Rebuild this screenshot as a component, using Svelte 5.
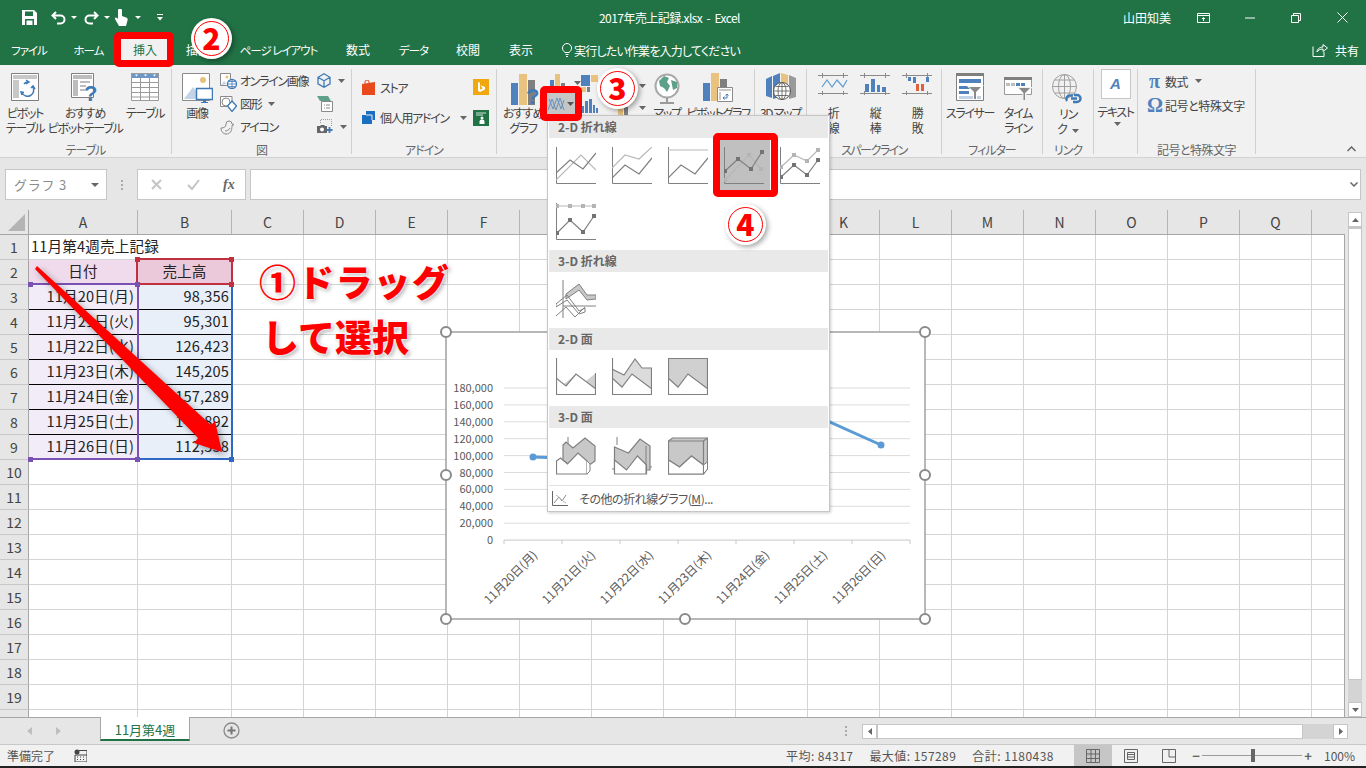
<script>
    const tabs = [
        {label: 'ファイル', w: 58, kana: true},
        {label: 'ホーム', w: 61, kana: true},
        {label: '挿入', w: 52, active: true},
        {label: '描画', w: 54},
        {label: 'ページ レイアウト', w: 107, kana: true},
        {label: '数式', w: 52},
        {label: 'データ', w: 59, kana: true},
        {label: '校閲', w: 50},
        {label: '表示', w: 56}
    ]

    const colWidths = [109, 94, ...Array(16).fill(72)]
    const colNames = 'ABCDEFGHIJKLMNOPQR'.split('')
    const colCount = colWidths.length
    const rowCount = 20

    const sales = [
        ['11月20日(月)', '98,356'],
        ['11月21日(火)', '95,301'],
        ['11月22日(水)', '126,423'],
        ['11月23日(木)', '145,205'],
        ['11月24日(金)', '157,289'],
        ['11月25日(土)', '143,892'],
        ['11月26日(日)', '112,538']
    ]

    function cellText(row, col){
        if(row === 1 && col === 0) return '11月第4週売上記録'
        if(row === 2 && col === 0) return '日付'
        if(row === 2 && col === 1) return '売上高'
        if(row >= 3 && row <= 9 && col < 2) return sales[row - 3][col]
        return ''
    }

    function cellClass(row, col){
        if(col > 1) return 'cell'
        if(row === 1) return 'cell title'
        if(row === 2) return col === 0 ? 'cell head-a' : 'cell head-b'
        if(row >= 3 && row <= 9) return col === 0 ? 'cell data-a' : 'cell data-b'
        return 'cell'
    }

    // chart: pixel coordinates relative to the chart frame
    const axisLabels = ['180,000', '160,000', '140,000', '120,000', '100,000', '80,000', '60,000', '40,000', '20,000', '0']
    const gridY = axisLabels.map((_, i) => 56 + i * 16.9)
    const xTicks = Array.from({length: 8}, (_, i) => 58 + i * 58)

    // menu thumbnails, 40x37
    const lineThumbs = [
        {dark: '0,26 14,13 27,22 40,6', light: '0,33 25,8 40,23'},
        {dark: '0,31 13,18 27,27 40,11', light: '0,21 13,8 27,12 40,0'},
        {dark: '0,31 13,18 27,27 40,11', light: '0,3 40,3'},
        {dark: '1,24 14,12 27,22 38,5', light: '1,33 25,8 37,22', marks: true, hot: true},
        {dark: '1,30 14,18 27,28 38,13', light: '1,20 14,8 27,14 38,3', marks: true},
        {dark: '1,30 14,17 27,29 38,13', light: '1,3 14,3 27,3 38,3', marks: true}
    ]

    const pts = s => s.split(' ').map(p => p.split(',').map(Number))
</script>

{#snippet caret()}
    <svg class="caret" width="7" height="4" viewBox="0 0 7 4"><path d="M0 0h7L3.500 4z" fill="#666"/></svg>
{/snippet}

{#snippet thumb(t)}
    <svg width="40" height="38" viewBox="0 0 40 38">
        <path d="M.5 0v36.500H40" fill="none" stroke="#808080"/>
        <polyline points={t.light} fill="none" stroke="#b8b8b8" stroke-width="1.2"/>
        <polyline points={t.dark} fill="none" stroke="#7f7f7f" stroke-width="1.2"/>
        {#if t.marks}
            {#each pts(t.light) as p}
                <rect x={p[0] - 2} y={p[1] - 2} width="4" height="4" fill="#b4b4b4"/>
            {/each}
            {#each pts(t.dark) as p}
                <rect x={p[0] - 2} y={p[1] - 2} width="4" height="4" fill="#737373"/>
            {/each}
        {/if}
    </svg>
{/snippet}

<div class="app">
    <header class="titlebar">
        <div class="qat">
            <svg width="15" height="15" viewBox="0 0 15 15"><path d="M0 0h12l3 3v12H0z" fill="#fff"/><path d="M3 1.500h8v4.500H3z" fill="#217346"/><path d="M3 9h9v6H3z" fill="#217346"/><path d="M4.500 10.500h6V15h-6z" fill="#fff"/></svg>
            <svg class="q1" width="15" height="14" viewBox="0 0 15 14"><path d="M5 1L1.500 4.500 5 8M2 4.500h7.500a4 4 0 0 1 0 8H6" fill="none" stroke="#fff" stroke-width="2"/></svg>
            <svg class="q2" width="6" height="3" viewBox="0 0 6 3"><path d="M0 0h6L3 3z" fill="#fff"/></svg>
            <svg class="q3" width="15" height="14" viewBox="0 0 15 14"><path d="M10 1l3.500 3.500L10 8M13 4.500H5.500a4 4 0 0 0 0 8H9" fill="none" stroke="#fff" stroke-width="2"/></svg>
            <svg class="q4" width="6" height="3" viewBox="0 0 6 3"><path d="M0 0h6L3 3z" fill="#fff"/></svg>
            <svg class="q5" width="13" height="17" viewBox="0 0 13 17"><path d="M3 1.500a2 2 0 0 1 4 0V7l4 1.500c1.500.5 2 1.500 1.500 3L11 17H4L0 10c-.5-1.500 1-2 2-1l1 1z" fill="#fff"/></svg>
            <svg class="q6" width="6" height="3" viewBox="0 0 6 3"><path d="M0 0h6L3 3z" fill="#fff"/></svg>
            <svg class="q7" width="6" height="7" viewBox="0 0 6 7"><path d="M0 0h6v1H0zM0 3h6L3 6.500z" fill="#fff"/></svg>
        </div>
        <div class="doc-title">2017年売上記録.xlsx &nbsp;-&nbsp; Excel</div>
        <div class="winctl">
            <span class="user">山田知美</span>
            <svg class="w1" width="13" height="10" viewBox="0 0 13 10"><path d="M.5.500h12v9H.5zM.5 2.500h12M6.500 8V4.500M5 6l1.500-1.500L8 6" fill="none" stroke="#fff"/></svg>
            <svg class="w2" width="10" height="2" viewBox="0 0 10 2"><path d="M0 1h10" stroke="#fff"/></svg>
            <svg class="w3" width="10" height="10" viewBox="0 0 10 10"><path d="M.5 2.500h7v7h-7zM2.500 2.500v-2h7v7h-2" fill="none" stroke="#fff"/></svg>
            <svg class="w4" width="11" height="11" viewBox="0 0 11 11"><path d="M.5.500l10 10M10.500.500l-10 10" stroke="#fff"/></svg>
        </div>
    </header>

    <nav class="tabs">
        {#each tabs as tab}
            <div class="tab" class:active={tab.active} class:kana={tab.kana} style="width:{tab.w}px">{tab.label}</div>
        {/each}
        <div class="tellme">
            <svg width="10" height="14" viewBox="0 0 10 14"><path d="M3 9.500C1 8 .5 6.500.5 5a4.500 4.500 0 0 1 9 0c0 1.500-.5 3-2.500 4.500zM3.500 11.500h3M4 13.500h2" fill="none" stroke="#fff"/></svg>
            <span>実行したい作業を入力してください</span>
        </div>
        <div class="share">
            <svg width="16" height="14" viewBox="0 0 16 14"><path d="M1 3.500v10h11V9M5 9c0-3 3-5 6-5V1.500L15.500 5 11 8.500V6C8 6 6 7 5 9z" fill="none" stroke="#fff"/></svg>
            <span>共有</span>
        </div>
    </nav>

    <section class="ribbon">
        <div class="group g-table">
            <div class="body">
                <div class="big w-pivot">
                    <div class="ic">
                        <svg width="28" height="28" viewBox="0 0 28 28"><path d="M.5.500h27v27H.5z" fill="#fff" stroke="#7f7f7f"/><path d="M2 2h24v4H2zM2 7h6v18H2z" fill="#c8c8c8"/><path d="M11 20a6 6 0 0 0 11-6M20 15l2-2 2 3M13 11a5 5 0 0 1 4-2M15 7l3 2-3 2M11 22l-1-3 3 .5" fill="none" stroke="#3f7ab5" stroke-width="1.500"/></svg>
                    </div>
                    <span>ピボット<br>テーブル</span>
                </div>
                <div class="big w-recommend">
                    <div class="ic">
                        <svg width="28" height="30" viewBox="0 0 28 30"><path d="M.5.500h22v24H.5z" fill="#fff" stroke="#7f7f7f"/><path d="M2 2h19v4H2zM2 7h5v16H2zM9 8h10v2H9zM9 12h6v2H9zM9 16h5v2H9z" fill="#bdbdbd"/><text x="13" y="28" class="qmark">?</text></svg>
                    </div>
                    <span>おすすめ<br>ピボットテーブル</span>
                </div>
                <div class="big w-tbl">
                    <div class="ic">
                        <svg width="28" height="28" viewBox="0 0 28 28"><path d="M0 0h28v28H0z" fill="#fff"/><path d="M0 0h28v5H0z" fill="#6f97c6"/><path d="M.5.500h27v27H.5zM.5 9.500h27M.5 14.500h27M.5 19.500h27M.5 24h27M9.500 5v23M18.500 5v23" fill="none" stroke="#9a9a9a"/><path d="M4 1.500h3L5.500 3.500zM13 1.500h3l-1.500 2zM22 1.500h3l-1.500 2z" fill="#fff"/></svg>
                    </div>
                    <span>テーブル</span>
                </div>
            </div>
            <div class="glabel">テーブル</div>
        </div>

        <div class="group g-figure">
            <div class="body">
                <div class="big w-pic">
                    <div class="ic">
                        <svg width="31" height="32" viewBox="0 0 31 32"><path d="M.5.500h27v27H.5z" fill="#fff" stroke="#8a8a8a"/><circle cx="21" cy="7" r="3" fill="#e3c27a"/><path d="M2 26l9-12 6 7 3-3v8z" fill="#c3d4e8"/><path d="M14.500 15.500h16v11h-16z" fill="#fff" stroke="#3f7ab5" stroke-width="1.500"/><path d="M21 27h3v2h2v1h-7v-1h2z" fill="#3f7ab5"/></svg>
                    </div>
                    <span>画像</span>
                </div>
                <div class="smallcol c-online">
                    <div class="sm">
                        <svg width="17" height="16" viewBox="0 0 17 16"><path d="M.5.500h10v12H.5z" fill="#fff" stroke="#8a8a8a"/><path d="M1 12l3-4 3 3z" fill="#c3d4e8"/><circle cx="7" cy="4" r="1.500" fill="#e3c27a"/><circle cx="12" cy="11" r="4.500" fill="#fff" stroke="#3f7ab5" stroke-width="1.300"/><path d="M7.500 11h9M12 6.500v9M8.500 8.500h7M8.500 13.500h7" stroke="#3f7ab5" stroke-width=".8"/></svg>
                        <span>オンライン画像</span>
                    </div>
                    <div class="sm">
                        <svg width="17" height="16" viewBox="0 0 17 16"><path d="M7 10.500H.5V.500H12V5" fill="#fff" stroke="#8a8a8a"/><circle cx="6" cy="6" r="4" fill="none" stroke="#8a8a8a"/><path d="M12 5l4.500 5-4.500 5.500L7.500 10z" fill="#fff" stroke="#3f7ab5" stroke-width="1.300"/></svg>
                        <span>図形</span>
                        {@render caret()}
                    </div>
                    <div class="sm">
                        <svg width="17" height="16" viewBox="0 0 17 16"><path d="M1 9c3 0 5-1 5-4a3 3 0 0 1 6 0l2 .5-2 1c0 6-2 8.500-6 8.500-3 0-5-3-5-6zM5 12c2 0 4-1 5-3" fill="none" stroke="#8a8a8a"/></svg>
                        <span>アイコン</span>
                    </div>
                </div>
                <div class="smallcol c-3d">
                    <div class="sm tight">
                        <svg width="14" height="15" viewBox="0 0 14 15"><path d="M7 .8l6 3.500v6.500l-6 3.500-6-3.500V4.300zM1 4.300l6 3.500 6-3.500M7 7.800v6.500" fill="none" stroke="#3f7ab5" stroke-width="1.300"/></svg>
                        {@render caret()}
                    </div>
                    <div class="sm tight">
                        <svg width="16" height="16" viewBox="0 0 16 16"><path d="M0 0h11l3 5H3z" fill="#5fa08a"/><path d="M4.500 5.500h11v10h-11z" fill="#fff" stroke="#8a8a8a"/><path d="M7 9h1M9 9h4M7 12h1M9 12h4" stroke="#8a8a8a"/></svg>
                    </div>
                    <div class="sm tight">
                        <svg width="16" height="15" viewBox="0 0 16 15"><path d="M3.500 4V.500h11V7" fill="none" stroke="#9a9a9a" stroke-dasharray="1 1"/><path d="M0 7h3l1-1h3l1 1h2v7H0z" fill="#666"/><circle cx="5" cy="10.500" r="2" fill="#fff"/><path d="M12.500 8v6M9.500 11h6" stroke="#3f7ab5" stroke-width="1.800"/></svg>
                        {@render caret()}
                    </div>
                </div>
            </div>
            <div class="glabel">図</div>
        </div>

        <div class="group g-addin">
            <div class="body">
                <div class="smallcol c-store">
                    <div class="sm">
                        <svg width="15" height="15" viewBox="0 0 15 15"><path d="M1 4l13-2v13H1z" fill="#e8491d"/><path d="M4 4V2a2 2 0 0 1 4 0v2" fill="none" stroke="#e8491d"/></svg>
                        <span>ストア</span>
                    </div>
                    <div class="sm">
                        <svg width="15" height="15" viewBox="0 0 15 15"><path d="M5 1h9v9h-3v4H1V5h4z" fill="#1b6fc0"/><path d="M5 5h6v5" fill="none" stroke="#f1f1f1"/></svg>
                        <span>個人用アドイン</span>
                        {@render caret()}
                    </div>
                </div>
                <div class="smallcol c-bing">
                    <svg width="16" height="16" viewBox="0 0 16 16"><path d="M0 0h16v16H0z" fill="#f0a80e"/><path d="M5 3l2 .700v7l3-1.700-1.500-.7-.8-2L12 8v2.500L7 13l-2-1z" fill="#fff"/></svg>
                    <svg width="16" height="16" viewBox="0 0 16 16"><path d="M0 0h16v16H0z" fill="#217346"/><path d="M3 3h10M3 5h7" stroke="#cfe3d8"/><circle cx="9" cy="8" r="1.500" fill="#fff"/><path d="M6.500 14v-2.500a2.500 2 0 0 1 5 0V14z" fill="#fff"/></svg>
                </div>
            </div>
            <div class="glabel">アドイン</div>
        </div>

        <div class="group g-chart">
            <div class="body">
                <div class="big w-reco">
                    <div class="ic">
                        <svg class="reco-ic" width="30" height="32" viewBox="0 0 30 32"><path d="M0 10h7v22H0z" fill="#4f81bd"/><path d="M8 1h8v31H8z" fill="#e8c27e"/><path d="M17 7h7v25h-7z" fill="#7f7f7f"/><text x="15" y="31" class="qmark big-q">?</text></svg>
                    </div>
                    <span>おすすめ<br>グラフ</span>
                </div>
                <div class="smallcol c-charts">
                    <div class="sm tight">
                        <svg width="17" height="18" viewBox="0 0 17 18"><path d="M0 6h4v12H0z" fill="#4f81bd"/><path d="M5 0h5v18H5z" fill="#e8c27e"/><path d="M11 9h4v9h-4z" fill="#7f7f7f"/></svg>
                        {@render caret()}
                    </div>
                </div>
                <div class="smallcol c-hier">
                    <div class="sm tight">
                        <svg width="17" height="17" viewBox="0 0 17 17"><path d="M0 0h9v11H0z" fill="#4f81bd"/><path d="M10 0h7v7h-7z" fill="#e8c27e"/><path d="M0 12h5v5H0z" fill="#e8c27e"/><path d="M6 12h3v5H6z" fill="#7f7f7f"/></svg>
                    </div>
                    <div class="sm tight low">
                        <svg width="17" height="14" viewBox="0 0 17 14"><path d="M0 7h3v7H0zM4 2h3v12H4zM8 0h3v14H8zM12 6h2v8h-2zM15 9h2v5h-2z" fill="#4f81bd"/></svg>
                    </div>
                </div>
                <div class="smallcol c-misc">
                    <div class="sm tight">
                        <svg width="14" height="14" viewBox="0 0 14 14"><circle cx="7" cy="7" r="7" fill="#8a8a8a"/></svg>
                        {@render caret()}
                    </div>
                    <div class="sm tight low">
                        <svg width="14" height="14" viewBox="0 0 14 14"><path d="M0 4h5v10H0z" fill="#e8c27e"/><path d="M6 6h4v8H6z" fill="#7f7f7f"/></svg>
                        {@render caret()}
                    </div>
                </div>
                <div class="big w-map">
                    <div class="ic">
                        <svg width="26" height="32" viewBox="0 0 26 32"><circle cx="13" cy="13" r="11.500" fill="#fff" stroke="#a8a8a8" stroke-width="2"/><path d="M5 8l5-5 5 2-2 4 3 4-3 6-3-4-4-2zM17 7l6 2 0 6-4 2z" fill="#5fa08a"/><path d="M13 25v4M6 30h14" stroke="#9a9a9a" stroke-width="2"/></svg>
                    </div>
                    <span>マップ</span>
                </div>
                <div class="big w-pchart">
                    <div class="ic">
                        <svg width="30" height="32" viewBox="0 0 30 32"><path d="M0 10h7v18H0z" fill="#4f81bd"/><path d="M8 0h8v28H8z" fill="#e8c27e"/><path d="M17 6h7v8h-7z" fill="#7f7f7f"/><path d="M14.500 14.500h15v14h-15z" fill="#fff" stroke="#8a8a8a"/><path d="M16 16h12v2H16zM16 19h2v8h-2z" fill="#c8c8c8"/><path d="M20 25h4v-4M22.500 22.500L24 21l1.500 1.500M21.500 23.500L20 25l1.500 1.500" fill="none" stroke="#3f7ab5"/></svg>
                    </div>
                    <span>ピボットグラフ</span>
                </div>
            </div>
            <div class="glabel">グラフ</div>
        </div>

        <div class="group g-map3d">
            <div class="body">
                <div class="big w-3d">
                    <div class="ic">
                        <svg width="30" height="28" viewBox="0 0 30 28"><path d="M0 6l6-3v22l-6-2z" fill="#4f81bd"/><path d="M7 3l7-3v24l-7 2z" fill="#4f81bd"/><path d="M15 0l7 2v22l-7-2z" fill="#e8c27e"/><path d="M23 2l7 3v19l-7 2z" fill="#9a9a9a"/><circle cx="16" cy="18" r="8.500" fill="#fff" stroke="#555"/><path d="M8 18h16M16 10v16M10 13.500h12M10 22.500h12" stroke="#555" stroke-width=".8"/><ellipse cx="16" cy="18" rx="4" ry="8.500" fill="none" stroke="#555" stroke-width=".8"/></svg>
                    </div>
                    <span>3D マップ</span>
                </div>
            </div>
            <div class="glabel">ツアー</div>
        </div>

        <div class="group g-spark">
            <div class="body">
                <div class="big w-sp">
                    <div class="ic">
                        <svg width="30" height="22" viewBox="0 0 30 22"><path d="M0 2.500h30M0 20.500h30M4.500 0v5M4.500 18v4M25.500 0v5M25.500 18v4" stroke="#8a8a8a"/><path d="M4 14l5-7 5 7 5-7 6 7 4-7" fill="none" stroke="#5b9bd5" stroke-width="1.200"/></svg>
                    </div>
                    <span>折<br>線</span>
                </div>
                <div class="big w-sp">
                    <div class="ic">
                        <svg width="30" height="22" viewBox="0 0 30 22"><path d="M0 2.500h30M0 20.500h30M4.500 0v5M4.500 18v4M25.500 0v5M25.500 18v4" stroke="#8a8a8a"/><path d="M5 11h4v8H5zM11 6h4v13h-4zM17 12h3v7h-3zM22 14h4v5h-4z" fill="#4f81bd"/></svg>
                    </div>
                    <span>縦<br>棒</span>
                </div>
                <div class="big w-sp">
                    <div class="ic">
                        <svg width="30" height="22" viewBox="0 0 30 22"><path d="M0 2.500h30M0 20.500h30M4.500 0v5M4.500 18v4M25.500 0v5M25.500 18v4" stroke="#8a8a8a"/><path d="M6 4h3v4H6zM11 4h3v6h-3zM24 4h3v5h-3z" fill="#4f81bd"/><path d="M14 11h3v7h-3zM19 11h3v7h-3z" fill="#e0603a"/></svg>
                    </div>
                    <span>勝<br>敗</span>
                </div>
            </div>
            <div class="glabel tight-label">スパークライン</div>
        </div>

        <div class="group g-filter">
            <div class="body">
                <div class="big w-slicer">
                    <div class="ic">
                        <svg width="28" height="28" viewBox="0 0 28 28"><path d="M0 0h28v28H0z" fill="#fff"/><path d="M.5.500h27v27H.5z" fill="none" stroke="#7f7f7f"/><path d="M0 0h28v3H0z" fill="#7f7f7f"/><path d="M3 6h22v4H3zM3 13h13v3H3zM3 18h10v3H3z" fill="#4f81bd"/><path d="M3 23h22v3H3z" fill="#c3d4e8"/><path d="M10 12h18l-7 7v8h-4v-8z" fill="#fff"/><path d="M13 14h12l-5 5v7h-2v-7z" fill="#8a8a8a"/></svg>
                    </div>
                    <span>スライサー</span>
                </div>
                <div class="big w-timeline">
                    <div class="ic">
                        <svg width="29" height="28" viewBox="0 0 29 28"><path d="M.5 4.500h27v17H.5z" fill="#fff" stroke="#9a9a9a"/><path d="M0 4h28v3H0z" fill="#7f7f7f"/><path d="M2 10h4v3H2zM7 10h4v3H7z" fill="#bdbdbd"/><path d="M12 10h4v3h-4zM17 10h4v3h-4z" fill="#4f81bd"/><path d="M12 14h17l-6.500 6v8h-4v-8z" fill="#f1f1f1"/><path d="M15 15h11l-5 5v7h-1.500v-7z" fill="#8a8a8a"/></svg>
                    </div>
                    <span>タイム<br>ライン</span>
                </div>
            </div>
            <div class="glabel">フィルター</div>
        </div>

        <div class="group g-link">
            <div class="body">
                <div class="big w-link">
                    <div class="ic">
                        <svg width="32" height="32" viewBox="0 0 32 32"><circle cx="12.500" cy="12.500" r="12" fill="none" stroke="#a0a0a0"/><ellipse cx="12.500" cy="12.500" rx="6" ry="12" fill="none" stroke="#a0a0a0"/><path d="M.5 12.500h24M2.500 6h20M2.500 19h20M12.500 .5v24" stroke="#a0a0a0"/><path d="M15 27a3.500 3.500 0 0 1 3-5.500h3M22 21h3a3.500 3.500 0 0 1 0 7h-4M19 24.500h6" fill="none" stroke="#3f7ab5" stroke-width="2.500"/></svg>
                    </div>
                    <span>リン<br>ク {@render caret()}</span>
                </div>
            </div>
            <div class="glabel">リンク</div>
        </div>

        <div class="group g-text">
            <div class="body">
                <div class="big w-text">
                    <div class="textbox"><b>A</b></div>
                    <span class="tx">テキスト</span>
                    <div class="txcaret">{@render caret()}</div>
                </div>
            </div>
        </div>

        <div class="group g-symbol">
            <div class="body">
                <div class="smallcol c-sym">
                    <div class="sm sy">
                        <b class="greek">π</b>
                        <span>数式</span>
                        {@render caret()}
                    </div>
                    <div class="sm sy">
                        <b class="greek">Ω</b>
                        <span>記号と特殊文字</span>
                    </div>
                </div>
            </div>
            <div class="glabel sym-label">記号と特殊文字</div>
        </div>

        <svg class="collapse" width="9" height="6" viewBox="0 0 9 6"><path d="M.5 5L4.500 1l4 4" fill="none" stroke="#666" stroke-width="1.500"/></svg>
    </section>

    <section class="formula">
        <div class="namebox">
            <span>グラフ 3</span>
            <svg width="8" height="4" viewBox="0 0 8 4"><path d="M0 0h8L4 4z" fill="#666"/></svg>
        </div>
        <div class="fdots"><i></i><i></i><i></i></div>
        <div class="fbtns">
            <svg width="11" height="11" viewBox="0 0 11 11"><path d="M1 1l9 9M10 1l-9 9" stroke="#c4c4c4" stroke-width="2"/></svg>
            <svg width="13" height="11" viewBox="0 0 13 11"><path d="M1 6l4 4 7-9" fill="none" stroke="#c4c4c4" stroke-width="2"/></svg>
            <em>fx</em>
        </div>
        <div class="finput"></div>
        <svg class="fchev" width="8" height="5" viewBox="0 0 8 5"><path d="M.5.500L4 4 7.500.500" fill="none" stroke="#666" stroke-width="1.500"/></svg>
    </section>

    <section class="sheet">
        <div class="grid">
            <div class="colhead">
                <div class="corner"><svg width="18" height="17" viewBox="0 0 18 17"><path d="M17 0v17H0z" fill="#b4b4b4"/></svg></div>
                {#each colNames as name, i}
                    <div class="colname" style="width:{colWidths[i]}px">{i < colCount - 1 ? name : ''}</div>
                {/each}
            </div>
            <div class="rows">
                {#each Array(rowCount) as _, r}
                    <div class="row">
                        <div class="rowname">{r + 1}</div>
                        {#each colWidths as w, c}
                            <div class={cellClass(r + 1, c)} style="width:{w}px">{cellText(r + 1, c)}</div>
                        {/each}
                    </div>
                {/each}
            </div>
        </div>
        <div class="vscroll">
            <div class="sbtn"><svg width="7" height="4" viewBox="0 0 7 4"><path d="M3.500 0L7 4H0z" fill="#666"/></svg></div>
            <div class="vthumb"></div>
            <div class="vtrack"></div>
            <div class="sbtn"><svg width="7" height="4" viewBox="0 0 7 4"><path d="M0 0h7L3.500 4z" fill="#666"/></svg></div>
        </div>
    </section>

    <section class="sheetbar">
        <div class="nav">
            <svg width="5" height="8" viewBox="0 0 5 8"><path d="M5 0v8L0 4z" fill="#bdbdbd"/></svg>
            <svg width="5" height="8" viewBox="0 0 5 8"><path d="M0 0v8l5-4z" fill="#bdbdbd"/></svg>
        </div>
        <div class="sheettab">11月第4週</div>
        <svg class="addsheet" width="17" height="17" viewBox="0 0 17 17"><circle cx="8.500" cy="8.500" r="7.500" fill="none" stroke="#8a8a8a" stroke-width="1.300"/><path d="M4.500 8.500h8M8.500 4.500v8" stroke="#777" stroke-width="2"/></svg>
        <div class="hdots"><i></i><i></i><i></i></div>
        <div class="hscroll">
            <div class="hbtn"><svg width="4" height="7" viewBox="0 0 4 7"><path d="M4 0v7L0 3.500z" fill="#666"/></svg></div>
            <div class="hthumb"></div>
            <div class="htrack"></div>
            <div class="hbtn"><svg width="4" height="7" viewBox="0 0 4 7"><path d="M0 0v7l4-3.500z" fill="#666"/></svg></div>
        </div>
    </section>

    <footer class="status">
        <span class="ready">準備完了</span>
        <svg class="macro" width="13" height="13" viewBox="0 0 13 13"><circle cx="3" cy="3" r="2.500" fill="#444"/><path d="M5 1.500h8V13H1V6h12M3 8h1M6 8h1M9 8h1M3 10.500h1M6 10.500h1M9 10.500h1" fill="none" stroke="#444"/></svg>
        <span class="st s-avg">平均: 84317</span>
        <span class="st s-max">最大値: 157289</span>
        <span class="st s-sum">合計: 1180438</span>
        <div class="views">
            <div class="view on"><svg width="14" height="14" viewBox="0 0 14 14"><path d="M.5.500h13v13H.5zM.5 5h13M.5 9.500h13M5 .5v13M9.500 .5v13" fill="none" stroke="#666"/></svg></div>
            <div class="view"><svg width="14" height="14" viewBox="0 0 14 14"><path d="M.5.500h13v13H.5zM3.500 3.500h7v7h-7zM3.500 5.500h7M3.500 8h7" fill="none" stroke="#666"/></svg></div>
            <div class="view"><svg width="14" height="14" viewBox="0 0 14 14"><path d="M.5.500h13v13H.5zM7 .5v7.500h6.500" fill="none" stroke="#666"/></svg></div>
        </div>
        <div class="zoom">
            <b class="zbtn">−</b>
            <div class="slider"><i></i></div>
            <b class="zbtn">+</b>
            <span>100%</span>
        </div>
    </footer>
    <div class="bottomline"></div>

    <!-- chart floating over the sheet -->
    <svg class="chart" width="479" height="287" viewBox="0 0 479 287">
        <rect x="0" y="0" width="479" height="287" fill="#fff" stroke="#a0a0a0" stroke-width="1.500"/>
        {#each gridY as y, i}
            <line x1="58" x2="464" y1={y} y2={y} stroke={i === 9 ? '#c8c8c8' : '#dcdcdc'}/>
            <text class="axis" x="47" y={y + 4} text-anchor="end">{axisLabels[i]}</text>
        {/each}
        {#each xTicks as x}
            <line x1={x} x2={x} y1="208" y2="212" stroke="#c8c8c8"/>
        {/each}
        {#each sales as s, i}
            <text class="axis xlab" text-anchor="end" transform="translate({xTicks[i] + 34} 224) rotate(-45)">{s[0]}</text>
        {/each}
        <polyline points="87,125 145,127 203,101 261,85 319,75 377,87 435,113" fill="none" stroke="#5b9bd5" stroke-width="3"/>
        {#each [87, 435] as x, i}
            <circle cx={x} cy={i === 0 ? 125 : 113} r="3.500" fill="#5b9bd5"/>
        {/each}
        {#each [[0,0],[479,0],[0,143],[479,143],[0,287],[239,287],[479,287]] as h}
            <circle cx={h[0]} cy={h[1]} r="5" fill="#fff" stroke="#8a8a8a" stroke-width="2"/>
        {/each}
    </svg>

    <!-- chart source ranges -->
    <div class="sel sel-cat"></div>
    <div class="sel sel-val"></div>
    <div class="sel sel-name"></div>
    {#each [[30,284,'p'],[137,284,'p'],[137,259,'r'],[231,259,'r'],[231,284,'r'],[30,459,'p'],[137,459,'p'],[231,459,'b']] as h}
        <i class="hnd hnd-{h[2]}" style="left:{h[0] - 2}px;top:{h[1] - 2}px"></i>
    {/each}

    <!-- annotation arrow -->
    <svg class="arrow" width="1366" height="768" viewBox="0 0 1366 768">
        <polygon points="35,269 37,266 211,425 215,421 222,452 194,443 198,438" fill="#f00"/>
    </svg>

    <!-- chart type dropdown -->
    <div class="menu">
        <div class="band">2-D 折れ線</div>
        <div class="thumbs">
            {#each lineThumbs as t}
                <div class={t.hot ? 'thumb hot' : 'thumb'}>{@render thumb(t)}</div>
            {/each}
        </div>
        <div class="band">3-D 折れ線</div>
        <div class="thumbs single">
            <svg width="40" height="38" viewBox="0 0 40 38">
                <path d="M7 0v38M7 26h33" fill="none" stroke="#808080"/>
                <path d="M10 14L23 4l8 11 9 0v4l-9 1-8-10-13 9z" fill="#c8c8c8" stroke="#808080"/>
                <path d="M0 24l11-9 12 16 6-3v4l-6 2L11 20 0 27zM0 36l10-9 9 10 10-10" fill="none" stroke="#808080"/>
            </svg>
        </div>
        <div class="band">2-D 面</div>
        <div class="thumbs area">
            <svg width="40" height="38" viewBox="0 0 40 38">
                <path d="M8 26l12-10-9 12zM30 23l10-8v16z" fill="#d0d0d0"/>
                <path d="M0 20l10 8 10-12 20 15" fill="none" stroke="#808080" stroke-width="1.200"/>
                <path d="M.5 0v36.500h39V15" fill="none" stroke="#808080" stroke-width="1.200"/>
            </svg>
            <svg width="40" height="38" viewBox="0 0 40 38">
                <path d="M0 11l12 6L23 1l7 9h10v21L20 16 10 29 0 20z" fill="#dcdcdc" stroke="#808080" stroke-width="1.200"/>
                <path d="M.5 0v36.500h39V10" fill="none" stroke="#808080" stroke-width="1.200"/>
            </svg>
            <svg width="40" height="38" viewBox="0 0 40 38">
                <path d="M0 0h40v31L20 16 10 29 0 20z" fill="#d0d0d0" stroke="#808080" stroke-width="1.200"/>
                <path d="M.5.500h39v36H.5z" fill="none" stroke="#808080" stroke-width="1.200"/>
            </svg>
        </div>
        <div class="band">3-D 面</div>
        <div class="thumbs area3d">
            <svg width="40" height="38" viewBox="0 0 40 38">
                <path d="M12 0v8" stroke="#808080"/>
                <path d="M7 8l3-3 7 6L29 1l10 8v15l-4 3H12L7 23z" fill="#c8c8c8" stroke="#808080" stroke-width="1.200"/>
                <path d="M.5 24l4-3 7 6L22 16l9 8v13H.5z" fill="#fff" stroke="#808080" stroke-width="1.200"/>
                <path d="M31 24l3 3v7l-3 3" fill="#fff" stroke="#808080"/>
            </svg>
            <svg width="40" height="38" viewBox="0 0 40 38">
                <path d="M5 0v8M0 32h2M37 30h3" stroke="#808080"/>
                <path d="M2.500 10l14 6L28 2l10 7v24H2.500z" fill="#c8c8c8" stroke="#808080" stroke-width="1.200"/>
                <path d="M2.500 23l12 10 11-14 9 9v9H2.500z" fill="#fff" stroke="#808080" stroke-width="1.200"/>
                <path d="M34 9v28" stroke="#808080"/>
            </svg>
            <svg width="40" height="38" viewBox="0 0 40 38">
                <path d="M.5 4l4-3h35v31l-4 5H.5z" fill="#c8c8c8" stroke="#808080" stroke-width="1.200"/>
                <path d="M.5 4h35v33M.5 23l11 7 12-11 12 9M35.500 4l4-3" fill="none" stroke="#808080" stroke-width="1.200"/>
                <path d="M.5 23l11 7 12-11 12 9v9H.5z" fill="#fff" stroke="#808080" stroke-width="1.200"/>
                <path d="M35.500 28l4-3v7l-4 5z" fill="#fff" stroke="#808080"/>
            </svg>
        </div>
        <div class="more">
            <svg width="16" height="15" viewBox="0 0 16 15"><path d="M.5 0v14.500H16" fill="none" stroke="#666"/><path d="M2 12l5-6 3 4 4-6" fill="none" stroke="#8a8a8a"/><path d="M4 4l4 3 3 3 3 2" fill="none" stroke="#b4b4b4"/></svg>
            <span>その他の折れ線グラフ(<u>M</u>)...</span>
        </div>
    </div>

    <!-- selected chart button drawn over the dropdown edge -->
    <div class="linebtn">
        <svg width="17" height="14" viewBox="0 0 17 14"><path d="M0 13L4 2l4 11 4-12 4 12M1 2l4 10 4-11 4 11 3-9" fill="none" stroke="#5b8dbf" stroke-width=".9"/></svg>
        <svg width="7" height="4" viewBox="0 0 7 4"><path d="M0 0h7L3.500 4z" fill="#555"/></svg>
    </div>

    <!-- red marks of the how-to screenshot -->
    <div class="redbox box-tab"></div>
    <div class="redbox box-item"></div>

    <div class="badge b2"><span>2</span></div>
    <div class="badge b3"><span>3</span></div>
    <div class="badge b4"><span>4</span></div>

    <div class="note n1">①ドラッグ</div>
    <div class="note n2">して選択</div>
</div>

<style>
    :global(body) {
        margin: 0;
        background: #fff;
    }

    .app {
        position: relative;
        width: 1366px;
        height: 768px;
        overflow: hidden;
        font-family: "Noto Sans CJK JP", "Noto Sans", sans-serif;
        font-feature-settings: "palt";
        font-size: 12px;
        color: #444;
        background: #e6e6e6;
    }

    svg {
        display: block;
        flex: none;
    }

    /* title bar */
    .titlebar {
        height: 35px;
        background: #217346;
        display: flex;
        align-items: center;
        color: #fff;
    }

    .qat {
        width: 599px;
        display: flex;
        align-items: center;
        padding-left: 22px;
        box-sizing: border-box;
    }

    .q1 { margin-left: 14px; }
    .q2 { margin-left: 5px; }
    .q3 { margin-left: 7px; }
    .q4 { margin-left: 5px; }
    .q5 { margin-left: 5px; }
    .q6 { margin-left: 7px; }
    .q7 { margin-left: 16px; }

    .doc-title {
        font-size: 12px;
        letter-spacing: -.55px;
        white-space: nowrap;
    }

    .winctl {
        margin-left: auto;
        display: flex;
        align-items: center;
        padding-right: 18px;
    }

    .user {
        font-size: 12px;
        margin-right: 26px;
    }

    .w2 { margin-left: 35px; }
    .w3 { margin-left: 36px; }
    .w4 { margin-left: 36px; }

    /* tabs */
    .tabs {
        height: 30px;
        background: #217346;
        display: flex;
        align-items: center;
        color: #fff;
    }

    .tab {
        height: 100%;
        line-height: 30px;
        text-align: center;
        white-space: nowrap;
        flex: none;
    }

    .tab.kana {
        font-size: 11.500px;
        letter-spacing: -1px;
    }

    .tab.active {
        background: #f1f1f1;
        color: #217346;
    }

    .tellme {
        display: flex;
        align-items: center;
        gap: 2px;
        margin-left: 13px;
        letter-spacing: -.8px;
    }

    .share {
        margin-left: auto;
        display: flex;
        align-items: center;
        gap: 7px;
        padding-right: 7px;
    }

    /* ribbon */
    .ribbon {
        position: relative;
        height: 93px;
        background: #f1f1f1;
        border-bottom: 1px solid #d2d2d2;
        box-sizing: border-box;
        display: flex;
    }

    .group {
        height: 85px;
        margin-top: 4px;
        border-right: 1px solid #d0d0d0;
        box-sizing: border-box;
        display: flex;
        flex-direction: column;
        flex: none;
    }

    .body {
        height: 73px;
        display: flex;
        flex: none;
    }

    .glabel {
        line-height: 16px;
        text-align: center;
        color: #666;
        letter-spacing: -1px;
        white-space: nowrap;
    }

    .tight-label { letter-spacing: -1.500px; }
    .sym-label { letter-spacing: -.5px; }

    .g-table { width: 172px; }
    .g-figure { width: 180px; }
    .g-addin { width: 145px; }
    .g-chart { width: 258px; }
    .g-map3d { width: 52px; }
    .g-spark { width: 135px; }
    .g-filter { width: 101px; }
    .g-link { width: 51px; }
    .g-text { width: 44px; }
    .g-symbol { width: 118px; }

    .big {
        padding-top: 4px;
        line-height: 15px;
        flex: none;
        display: flex;
        flex-direction: column;
        align-items: center;
    }

    .big span {
        white-space: nowrap;
        text-align: center;
        letter-spacing: -1.300px;
    }

    .ic {
        height: 32px;
        display: flex;
        justify-content: center;
        align-self: stretch;
    }

    .reco-ic {
        margin-left: 6px;
    }

    .qmark {
        font-family: "Liberation Sans", sans-serif;
        font-weight: 700;
        font-size: 22px;
        fill: #3f7ab5;
    }

    .big-q {
        font-size: 22px;
    }

    .w-pivot { width: 46px; margin-left: 2px; }
    .w-recommend { width: 74px; }
    .w-tbl { width: 46px; }
    .w-pic { width: 46px; margin-left: 2px; }
    .w-reco { width: 52px; }
    .w-map { width: 50px; }
    .w-pchart { width: 52px; }
    .w-3d { width: 51px; }
    .w-sp { width: 42px; }
    .w-sp:first-child { margin-left: 5px; }
    .w-slicer { width: 56px; }
    .w-timeline { width: 40px; }
    .w-link { width: 50px; margin-top: 1px; }
    .w-text { width: 43px; padding-top: 0; }

    .smallcol {
        display: flex;
        flex-direction: column;
        flex: none;
    }

    .sm {
        height: 23px;
        display: flex;
        align-items: center;
        gap: 3px;
        white-space: nowrap;
    }

    .sm span {
        letter-spacing: -1.300px;
    }

    .caret {
        display: inline-block;
        margin-left: 4px;
        vertical-align: middle;
    }

    .c-online { width: 97px; }
    .c-store { width: 112px; margin-left: 9px; padding-top: 7px; gap: 7px; }
    .c-bing { gap: 15px; padding-top: 10px; }

    .c-store .sm svg:first-child { margin-right: 1px; }
    .c-store .caret { margin-left: 8px; }

    .c-charts { width: 32px; padding-top: 2px; padding-left: 1px; box-sizing: border-box; }
    .c-hier { width: 37px; padding-top: 3px; }
    .c-misc { width: 24px; padding-top: 5px; }
    .low { margin-top: -1px; }

    .textbox {
        width: 30px;
        height: 30px;
        margin: 0 auto 5px;
        box-sizing: border-box;
        border: 1px solid #c6c6c6;
        background: #fff;
        text-align: center;
        line-height: 28px;
        font-family: "Liberation Sans", sans-serif;
        font-style: italic;
        font-size: 15px;
        color: #4f81bd;
    }

    .txcaret {
        display: flex;
        justify-content: center;
        margin-top: 3px;
    }

    .c-sym { margin-left: 9px; }
    .sy { height: 24px; }
    .sy span { letter-spacing: -.4px; }
    .greek {
        font-family: "Liberation Serif", serif;
        font-size: 20px;
        color: #4f81bd;
        width: 15px;
        text-align: center;
    }

    .collapse {
        position: absolute;
        right: 10px;
        bottom: 5px;
    }

    /* formula bar */
    .formula {
        height: 52px;
        padding: 11px 5px 10px;
        box-sizing: border-box;
        display: flex;
        align-items: stretch;
        position: relative;
    }

    .namebox, .fbtns, .finput {
        background: #fff;
        border: 1px solid #c6c6c6;
        box-sizing: border-box;
    }

    .namebox {
        width: 102px;
        display: flex;
        align-items: center;
        justify-content: space-between;
        padding: 0 7px 0 8px;
        font-size: 13px;
        letter-spacing: .8px;
        font-feature-settings: normal;
        color: #8c8c8c;
    }

    .fdots, .hdots {
        display: flex;
        flex-direction: column;
        justify-content: center;
        gap: 2px;
    }

    .fdots {
        width: 30px;
        align-items: center;
    }

    .fdots i, .hdots i {
        width: 2px;
        height: 2px;
        background: #aaa;
    }

    .fbtns {
        width: 109px;
        display: flex;
        align-items: center;
        padding-left: 13px;
        gap: 25px;
    }

    .fbtns em {
        font-family: "Liberation Serif", serif;
        font-weight: 700;
        font-size: 14px;
        color: #666;
        margin-left: -2px;
    }

    .finput {
        width: 1111px;
        margin-left: 4px;
    }

    .fchev {
        position: absolute;
        right: 8px;
        top: 24px;
    }

    /* sheet */
    .sheet {
        height: 507px;
        display: flex;
    }

    .grid {
        width: 1345px;
        overflow: hidden;
    }

    .colhead {
        height: 25px;
        display: flex;
        box-sizing: border-box;
        border-bottom: 1px solid #a6a6a6;
    }

    .corner {
        width: 29px;
        flex: none;
        box-sizing: border-box;
        border-right: 1px solid #a6a6a6;
        padding: 4px 0 0 8px;
    }

    .colname {
        flex: none;
        box-sizing: border-box;
        border-right: 1px solid #b4b4b4;
        text-align: center;
        font-size: 14px;
        line-height: 24px;
        color: #444;
    }

    .colname:last-child {
        border-right: 0;
    }

    .rows {
        height: 482px;
        overflow: hidden;
        background: #fff;
        border-right: 1px solid #a6a6a6;
        box-sizing: border-box;
    }

    .row {
        height: 25px;
        display: flex;
    }

    .rowname {
        width: 29px;
        flex: none;
        box-sizing: border-box;
        background: #e6e6e6;
        border-right: 1px solid #a6a6a6;
        border-bottom: 1px solid #c8c8c8;
        text-align: center;
        font-size: 14px;
        line-height: 24px;
        color: #444;
    }

    .cell {
        flex: none;
        box-sizing: border-box;
        border-right: 1px solid #d4d4d4;
        border-bottom: 1px solid #d4d4d4;
        font-size: 14.600px;
        letter-spacing: .15px;
        line-height: 22px;
        color: #222;
        white-space: nowrap;
        font-feature-settings: normal;
    }

    .title {
        overflow: visible;
        padding-left: 2px;
        border-right-color: transparent;
    }

    .head-a, .head-b {
        text-align: center;
    }

    .head-a { background: #efdbeb; }
    .head-b { background: #ecc9da; }

    .data-a, .data-b {
        text-align: right;
        padding-right: 3px;
        border-bottom-color: #000;
    }

    .data-a { background: #f1ecf7; }
    .data-b { background: #e8eff9; padding-right: 2px; }

    .vscroll {
        width: 21px;
        box-sizing: border-box;
        padding: 2px 4px 0 3px;
        display: flex;
        flex-direction: column;
    }

    .sbtn {
        height: 15px;
        flex: none;
        background: #fff;
        border: 1px solid #c6c6c6;
        box-sizing: border-box;
        display: flex;
        align-items: center;
        justify-content: center;
    }

    .vthumb {
        flex: 1;
        background: #fff;
        border: 1px solid #c6c6c6;
        border-top-width: 2px;
        box-sizing: border-box;
    }

    .vtrack {
        height: 22px;
        flex: none;
        background: #d4d4d4;
    }

    /* sheet tabs */
    .sheetbar {
        height: 28px;
        border-top: 1px solid #a6a6a6;
        border-bottom: 1px solid #c8c8c8;
        box-sizing: border-box;
        display: flex;
        align-items: flex-start;
        background: #e6e6e6;
    }

    .nav {
        width: 100px;
        flex: none;
        box-sizing: border-box;
        padding: 9px 0 0 27px;
        display: flex;
        gap: 24px;
    }

    .sheettab {
        width: 90px;
        height: 24px;
        flex: none;
        box-sizing: border-box;
        background: #fff;
        border-left: 1px solid #a6a6a6;
        border-right: 1px solid #a6a6a6;
        border-bottom: 2px solid #217346;
        margin-top: -1px;
        color: #217346;
        text-align: center;
        line-height: 25px;
        font-size: 13px;
        font-feature-settings: normal;
    }

    .addsheet {
        margin: 4px 0 0 33px;
    }

    .hdots {
        margin-left: 605px;
        width: 2px;
        height: 26px;
    }

    .hscroll {
        margin: 6px 0 0 15px;
        width: 486px;
        height: 15px;
        display: flex;
    }

    .hbtn {
        width: 15px;
        flex: none;
        background: #fff;
        border: 1px solid #c6c6c6;
        box-sizing: border-box;
        display: flex;
        align-items: center;
        justify-content: center;
    }

    .hthumb {
        width: 426px;
        flex: none;
        background: #fff;
        border: 1px solid #c6c6c6;
        box-sizing: border-box;
    }

    .htrack {
        flex: 1;
        background: #d4d4d4;
    }

    /* status bar */
    .status {
        height: 21px;
        background: #f1f1f1;
        display: flex;
        align-items: center;
        position: relative;
        color: #555;
    }

    .ready { margin-left: 7px; }
    .macro { margin-left: 19px; }

    .st {
        white-space: nowrap;
        font-feature-settings: normal;
        letter-spacing: .45px;
    }

    .s-avg { margin-left: 699px; }
    .s-max { margin-left: 16px; }
    .s-sum { margin-left: 16px; }

    .views {
        display: flex;
        height: 100%;
        margin-left: auto;
    }

    .view {
        width: 38px;
        display: flex;
        align-items: center;
        justify-content: center;
    }

    .view.on {
        background: #c6c6c6;
    }

    .zoom {
        width: 178px;
        display: flex;
        align-items: center;
        box-sizing: border-box;
        padding-left: 2px;
    }

    .zbtn {
        font-size: 13px;
        color: #666;
        width: 12px;
        text-align: center;
    }

    .slider {
        width: 100px;
        height: 1px;
        background: #9a9a9a;
        position: relative;
    }

    .slider i {
        position: absolute;
        left: 49px;
        top: -6px;
        width: 4px;
        height: 13px;
        background: #666;
    }

    .zoom span {
        margin-left: 10px;
        white-space: nowrap;
        font-feature-settings: normal;
    }

    .bottomline {
        height: 2px;
        background: #222;
    }

    /* chart */
    .chart {
        position: absolute;
        left: 446px;
        top: 332px;
        overflow: visible;
    }

    .axis {
        font-size: 11px;
        fill: #595959;
        font-feature-settings: normal;
    }

    .xlab {
        font-size: 12px;
        letter-spacing: -.2px;
    }

    /* source range outlines */
    .sel {
        position: absolute;
        box-sizing: border-box;
    }

    .sel-cat {
        left: 30px;
        top: 283px;
        width: 109px;
        height: 177px;
        border: solid #7a52b4;
        border-width: 2px 2px 2px 0;
    }

    .sel-val {
        left: 139px;
        top: 283px;
        width: 94px;
        height: 177px;
        border: solid #2f68c4;
        border-width: 0 2px 2px 0;
    }

    .sel-name {
        left: 136px;
        top: 258px;
        width: 97px;
        height: 27px;
        border: 2px solid #c0303f;
    }

    .hnd {
        position: absolute;
        width: 5px;
        height: 5px;
    }

    .hnd-p { background: #7a52b4; }
    .hnd-r { background: #c0303f; }
    .hnd-b { background: #2f68c4; }

    .arrow {
        position: absolute;
        left: 0;
        top: 0;
        pointer-events: none;
        filter: drop-shadow(3px 3px 3px rgba(0, 0, 0, .35));
    }

    /* dropdown */
    .menu {
        position: absolute;
        left: 547px;
        top: 115px;
        width: 283px;
        height: 397px;
        box-sizing: border-box;
        background: #fff;
        border: 1px solid #c6c6c6;
        box-shadow: 1px 1px 3px rgba(0, 0, 0, .2);
    }

    .band {
        height: 22px;
        margin: 0 1px;
        background: #e9e9e9;
        padding-left: 9px;
        line-height: 22px;
        font-weight: 700;
        color: #666;
        font-feature-settings: normal;
    }

    .thumbs {
        position: relative;
        z-index: 0;
        display: flex;
        flex-wrap: wrap;
        gap: 18px 16px;
        padding: 9px 0 9px 8px;
    }

    .single { padding: 8px 0 10px 8px; }
    .area { padding: 8px 0 10px 8px; }
    .area3d { padding: 9px 0 9px 8px; }

    .thumb {
        width: 40px;
        height: 38px;
    }

    .more {
        margin: 1px 1px 0;
        border-top: 1px solid #e2e2e2;
        height: 25px;
        display: flex;
        align-items: center;
        padding-left: 3px;
        color: #555;
    }

    .more span {
        margin-left: 11px;
        white-space: nowrap;
        letter-spacing: -.45px;
    }

    .linebtn {
        position: absolute;
        left: 547px;
        top: 93px;
        width: 28px;
        height: 21px;
        background: #c6c6c6;
        display: flex;
        align-items: center;
        gap: 2px;
        padding-left: 1px;
        box-sizing: border-box;
    }

    .linebtn::after {
        content: "";
        position: absolute;
        left: -7px;
        top: -7px;
        width: 42px;
        height: 35px;
        box-sizing: border-box;
        border: 7px solid #f00;
        border-radius: 5px;
    }

    .redbox {
        position: absolute;
        box-sizing: border-box;
        border: 7px solid #f00;
        border-radius: 5px;
    }

    .box-tab {
        left: 114px;
        top: 32px;
        width: 60px;
        height: 35px;
    }

    .box-item {
        left: 713px;
        top: 133px;
        width: 65px;
        height: 64px;
    }

    .hot {
        position: relative;
    }

    .hot::before {
        content: "";
        position: absolute;
        left: -6px;
        top: -7px;
        width: 52px;
        height: 50px;
        background: #c0c0c0;
        z-index: -1;
    }

    /* numbered circles */
    .badge {
        position: absolute;
        width: 41px;
        height: 41px;
        box-sizing: border-box;
        border-radius: 50%;
        background: #fff;
        box-shadow: 2px 2px 5px rgba(0, 0, 0, .35);
        display: flex;
        align-items: center;
        justify-content: center;
    }

    .badge span {
        width: 35px;
        height: 35px;
        box-sizing: border-box;
        border: 1.500px solid #f00;
        border-radius: 50%;
        color: #f00;
        font-size: 30px;
        font-weight: 900;
        line-height: 30px;
        text-align: center;
        font-feature-settings: normal;
    }

    .b2 { left: 191px; top: 18px; }
    .b3 { left: 597px; top: 68px; }
    .b4 { left: 725px; top: 204px; }

    .note {
        position: absolute;
        color: #f00;
        font-size: 37px;
        font-weight: 900;
        line-height: 44px;
        white-space: nowrap;
        font-feature-settings: normal;
        text-shadow: 0 0 3px #fff, 0 0 3px #fff, 2px 2px 4px rgba(0, 0, 0, .35);
    }

    .n1 { left: 259px; top: 259px; letter-spacing: 1.200px; }
    .n2 { left: 262px; top: 314px; }
</style>
